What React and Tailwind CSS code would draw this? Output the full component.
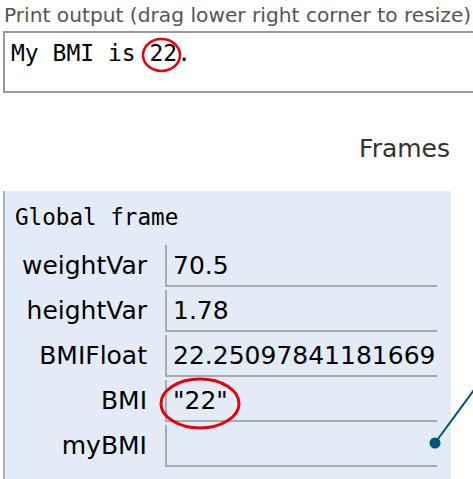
import React from 'react';

const rows = [
  { name: 'weightVar', value: '70.5' },
  { name: 'heightVar', value: '1.78' },
  { name: 'BMIFloat', value: '22.25097841181669' },
  { name: 'BMI', value: '"22"' },
  { name: 'myBMI', value: '' },
];

function VarRow({ name, value }) {
  return (
    <div className="flex h-[42px]">
      <div className="w-[142px] pt-[8px] text-right text-[25px] leading-[25px] text-black font-['DejaVu_Sans',sans-serif]">
        {name}
      </div>
      <div className="ml-[18px] w-[272px] border-b-2 border-l-2 border-[#aaaaaa] pl-[6px] pt-[8px] text-[25px] leading-[25px] text-black font-['DejaVu_Sans',sans-serif]">
        {value}
      </div>
    </div>
  );
}

export default function App() {
  return (
    <div className="relative h-[479px] w-[473px] overflow-hidden bg-white">
      <div className="pl-[4px] pt-[5px] text-[20.2px] leading-[20px] text-[#555555] font-['DejaVu_Sans',sans-serif]">
        Print output (drag lower right corner to resize)
      </div>

      <div className="ml-[3px] mt-[6px] h-[62px] w-[490px] border-2 border-[#999999] pl-[6px] pt-[9px] text-[23px] leading-[23px] text-black font-['DejaVu_Sans_Mono',monospace]">
        My BMI is 22.
      </div>

      <div className="mt-[43px] pr-[23px] text-right text-[25px] leading-[26px] text-[#333333] font-['DejaVu_Sans',sans-serif]">
        Frames
      </div>

      <div className="ml-[3px] mt-[29px] h-[300px] w-[448px] border-l-2 border-[#a6b3b6] bg-[#e2ebf6]">
        <div className="pl-[10px] pt-[15px] text-[22.6px] leading-[22px] text-black font-['DejaVu_Sans_Mono',monospace]">
          Global frame
        </div>
        <div className="mt-[17px] flex flex-col gap-[3px]">
          {rows.map((r) => (
            <VarRow key={r.name} name={r.name} value={r.value} />
          ))}
        </div>
      </div>

      {/* annotations and pointer arrow */}
      <svg className="pointer-events-none absolute left-0 top-0" width="473" height="479">
        <ellipse cx="161.5" cy="55" rx="18.5" ry="16" fill="none" stroke="#e8000b" strokeWidth="2.5" />
        <ellipse cx="200" cy="403.5" rx="39" ry="24.5" fill="none" stroke="#e8000b" strokeWidth="3" />
        <line x1="435" y1="443" x2="482" y2="379" stroke="#005583" strokeWidth="2" />
        <circle cx="435" cy="443" r="5.5" fill="#005583" />
      </svg>
    </div>
  );
}
